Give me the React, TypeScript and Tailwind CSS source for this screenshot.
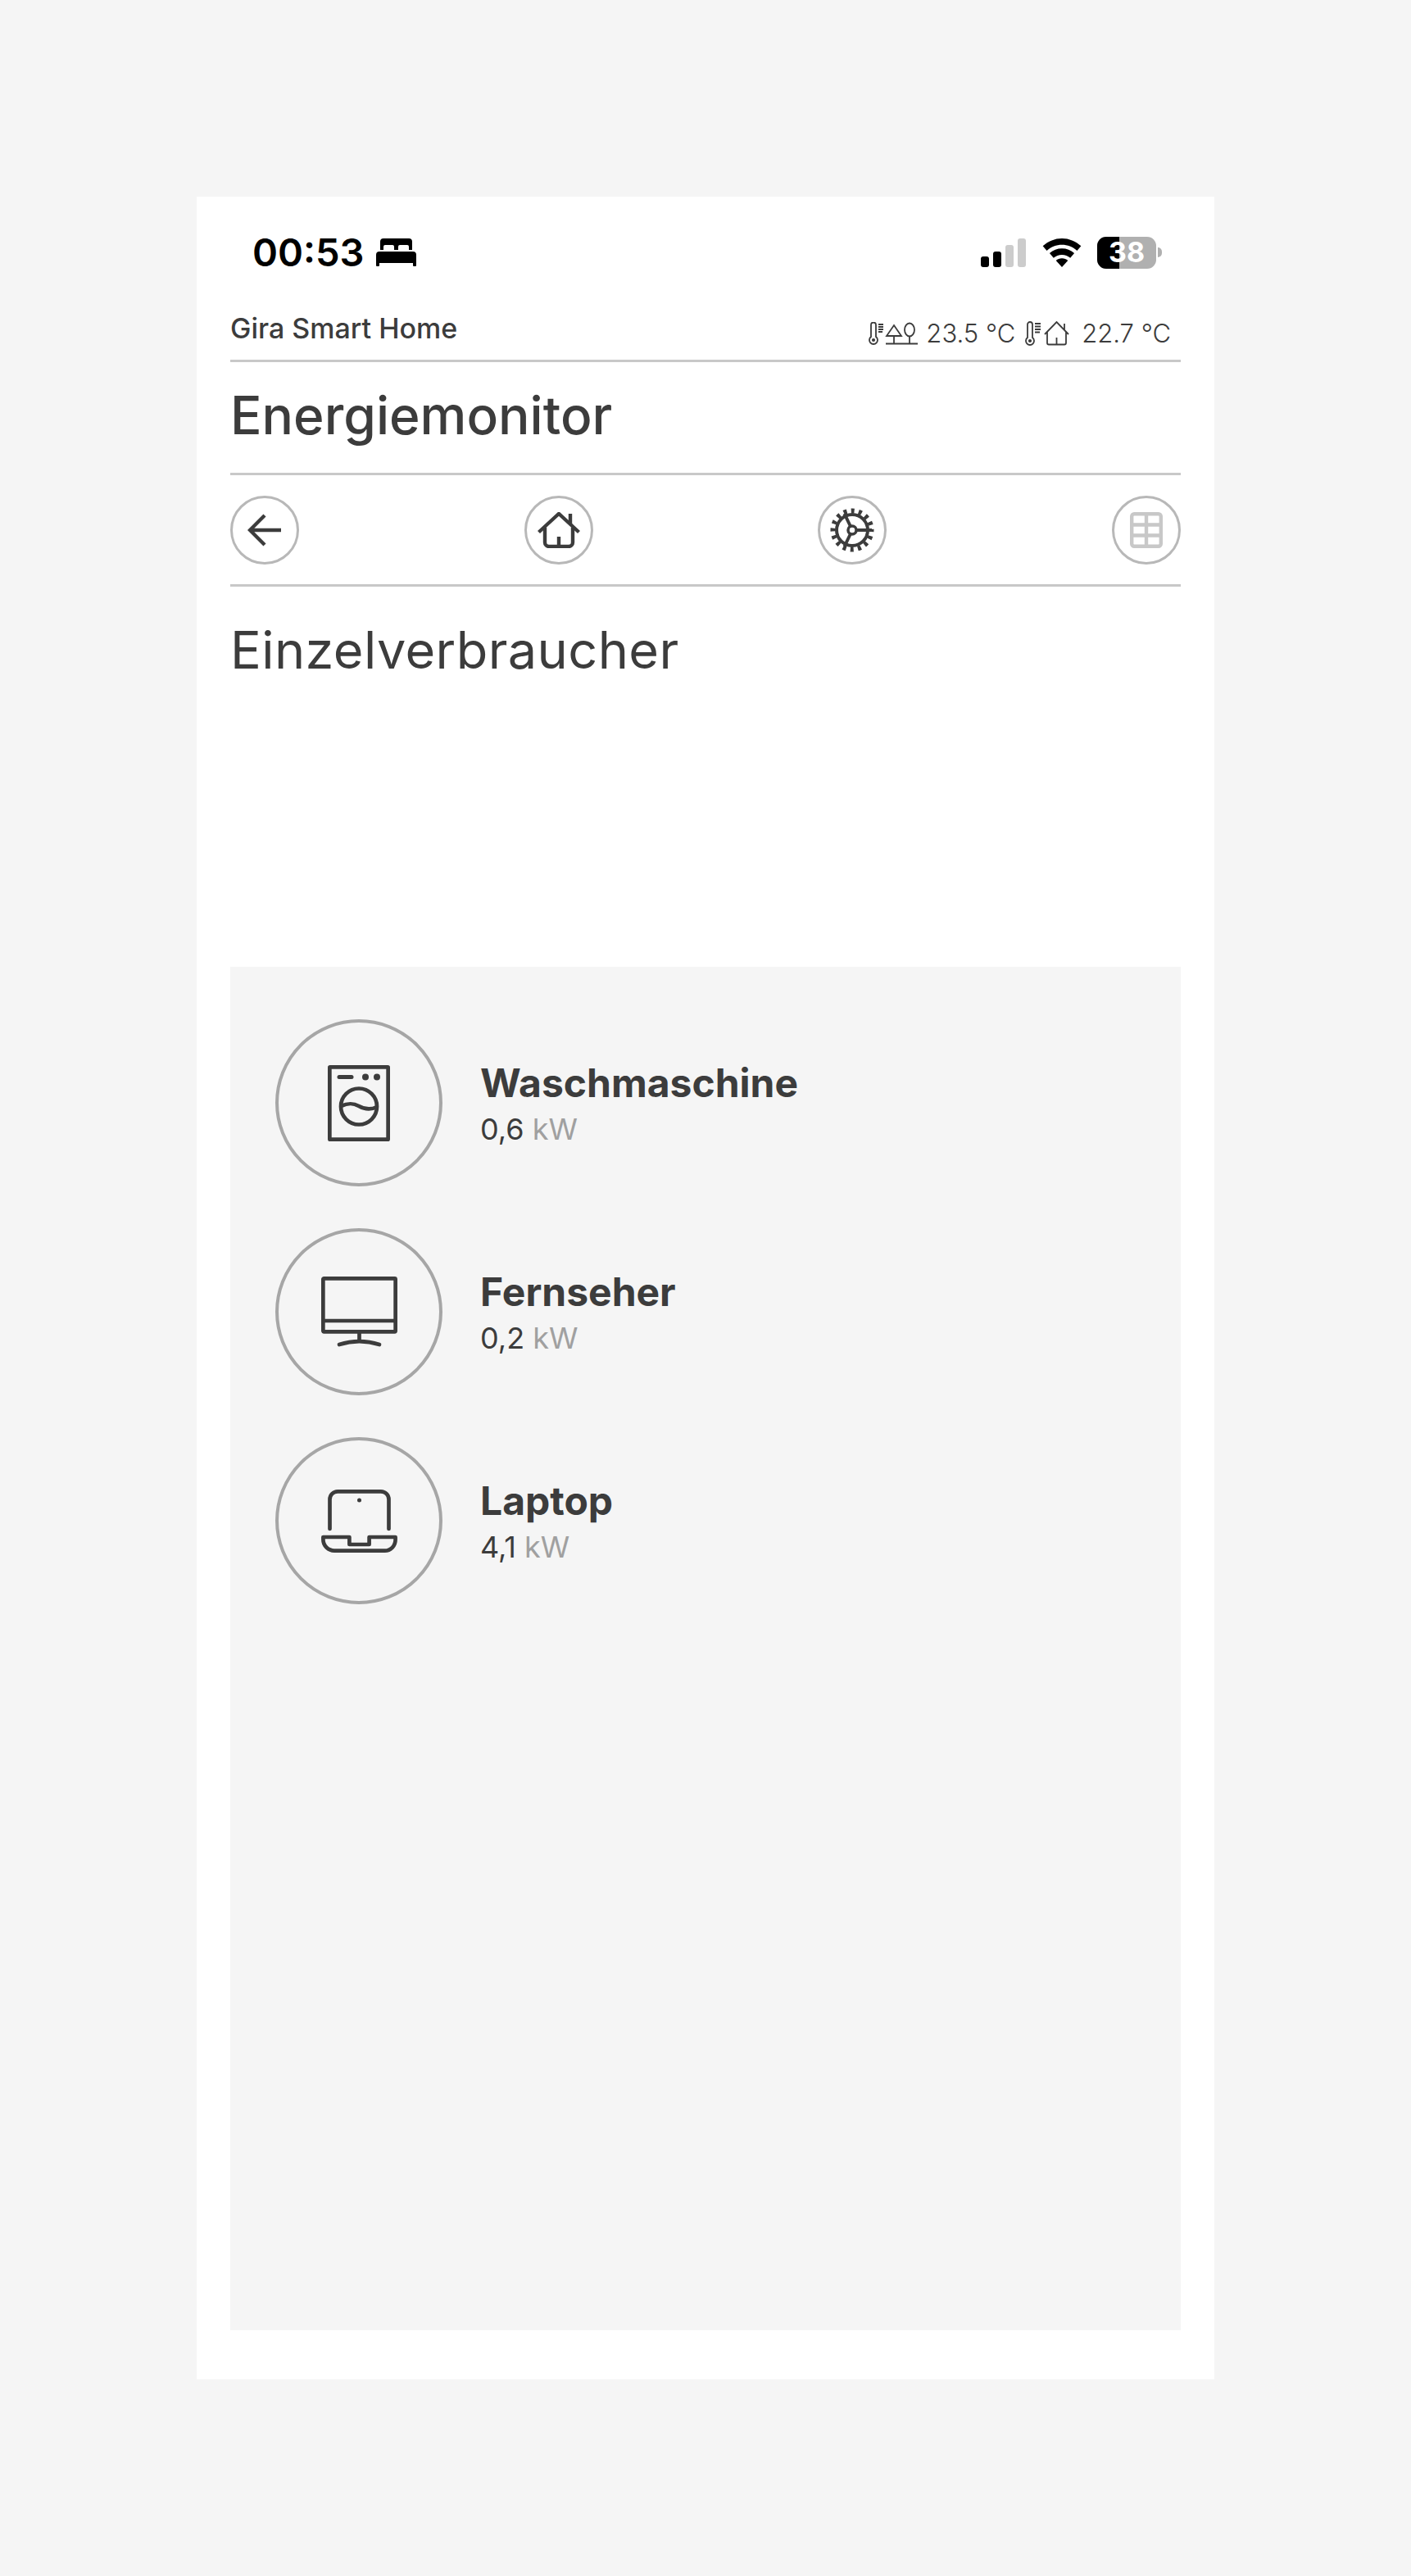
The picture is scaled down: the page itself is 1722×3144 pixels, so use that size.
const font = "font-['Inter','Liberation_Sans',sans-serif]";

function StatusBar() {
  return (
    <div className="flex items-center justify-between h-[40px] pl-[68px] pr-[64px]">
      <div className="flex items-center gap-[15px]">
        <span className="text-[47px] leading-[40px] font-semibold text-black">00:53</span>
        <svg width="49" height="34" viewBox="0 0 49 34" fill="#000">
          <path d="M5 4a4 4 0 0 1 4-4h31a4 4 0 0 1 4 4v10h-4v-4a2 2 0 0 0-2-2h-9a2 2 0 0 0-2 2v4h-5v-4a2 2 0 0 0-2-2h-9a2 2 0 0 0-2 2v4H5z" />
          <path d="M4 16h41a4 4 0 0 1 4 4v13a1 1 0 0 1-1 1h-2a1 1 0 0 1-1-1v-3H4v3a1 1 0 0 1-1 1H1a1 1 0 0 1-1-1V20a4 4 0 0 1 4-4z" />
        </svg>
      </div>
      <div className="flex items-center">
        <svg width="55" height="35" viewBox="0 0 55 35" className="mr-[20px]">
          <rect x="0" y="22" width="10" height="13" rx="3" fill="#000" />
          <rect x="15" y="16" width="10" height="19" rx="3" fill="#000" />
          <rect x="30" y="8" width="10" height="27" rx="3" fill="#ccc" />
          <rect x="45" y="0" width="10" height="35" rx="3" fill="#ccc" />
        </svg>
        <svg width="48" height="35" viewBox="0 0 48 36" className="mr-[19px]" fill="#000">
          <path d="M24 0C15 0 7 3.500 0 9.500l5 6C10.500 10.500 17 8 24 8s13.500 2.500 19 7.500l5-6C41 3.500 33 0 24 0z" />
          <path d="M24 12.500c-6 0-11 2-15.500 6l5 6c3-2.600 6.500-4 10.500-4s7.500 1.400 10.500 4l5-6c-4.500-4-9.500-6-15.500-6z" />
          <path d="M24 25c-3 0-5.300 1-7.500 2.800L24 36l7.500-8.200C29.300 26 27 25 24 25z" />
        </svg>
        <div className="relative w-[72px] h-[39px] rounded-[11px] overflow-hidden flex bg-[#b0b0b0]">
          <div className="w-[27px] bg-black" />
          <span className="absolute inset-0 flex items-center justify-center text-white text-[34px] font-bold leading-none">38</span>
        </div>
        <div className="w-[5px] h-[12px] rounded-r-[5px] bg-[#b0b0b0] ml-[2px]" />
      </div>
    </div>
  );
}

function TempOutIcon() {
  return (
    <svg width="60" height="28" viewBox="0 0 60 28" fill="none" stroke="#3c3c3c" strokeWidth="1.800">
      <path d="M3 18V3.500a3 3 0 0 1 6 0V18a5 5 0 1 1-6 0z" />
      <circle cx="6" cy="22" r="1.200" fill="#3c3c3c" />
      <path d="M12 3h6M12 6h6M12 9h6M12 12h5" />
      <path d="M21 26.500h39M31 17v9.500M50 18v8.500" />
      <path d="M31 4l9 13H22z" />
      <ellipse cx="50" cy="9.500" rx="6" ry="8" />
    </svg>
  );
}

function TempInIcon() {
  return (
    <svg width="56" height="30" viewBox="0 0 56 30" fill="none" stroke="#3c3c3c" strokeWidth="1.800">
      <path d="M3 20V4a3 3 0 0 1 6 0v16a5 5 0 1 1-6 0z" />
      <circle cx="6" cy="24" r="1.200" fill="#3c3c3c" />
      <path d="M12 3h7M12 6.500h7M12 10h7M12 13.500h6" />
      <path d="M24 16L38.500 1 53 16M27 13v13.500a2 2 0 0 0 2 2h19a2 2 0 0 0 2-2V13M38.500 28v-8M48 3v8" />
    </svg>
  );
}

function NavButton({ children }: { children: React.ReactNode }) {
  return (
    <div className="w-[84px] h-[84px] rounded-full border-[3px] border-[#b8b8b8] flex items-center justify-center">
      {children}
    </div>
  );
}

function WasherIcon() {
  return (
    <svg width="76" height="93" viewBox="0 0 76 93" fill="none" stroke="#3c3c3c" strokeWidth="4.700">
      <rect x="2.350" y="2.350" width="71.300" height="88.300" rx="0.500" strokeLinejoin="round" />
      <path d="M14 14.500h15" strokeLinecap="round" strokeWidth="5" />
      <circle cx="46" cy="14.500" r="4" fill="#3c3c3c" stroke="none" />
      <circle cx="60" cy="14.500" r="4" fill="#3c3c3c" stroke="none" />
      <circle cx="38" cy="50.500" r="22" />
      <path d="M16 50c9-4 15-4 22 0s14 5 22 1" />
    </svg>
  );
}

function TvIcon() {
  return (
    <svg width="93" height="86" viewBox="0 0 93 86" fill="none" stroke="#3c3c3c" strokeWidth="4.700">
      <rect x="2.350" y="2.350" width="88.300" height="65" rx="1" />
      <path d="M3 54h87M46.500 68v13" />
      <path d="M22 83c16-5 33-5 49 0" strokeLinecap="round" />
    </svg>
  );
}

function LaptopIcon() {
  return (
    <svg width="93" height="77" viewBox="0 0 93 77" fill="none" stroke="#3c3c3c" strokeWidth="4.700">
      <path d="M10.500 48V12a9.600 9.600 0 0 1 9.600-9.600h52.800a9.600 9.600 0 0 1 9.600 9.600v36" strokeLinecap="round" />
      <circle cx="46.500" cy="13" r="2.500" fill="#3c3c3c" stroke="none" />
      <path d="M2.400 58h32v9h24.200v-9h32v3c0 8-6 13.600-13 13.600H16C9 74.600 2.400 69 2.400 61z" strokeLinejoin="round" />
    </svg>
  );
}

function Consumer({ icon, name, value }: { icon: React.ReactNode; name: string; value: string }) {
  return (
    <div className="flex items-center gap-[46px]">
      <div className="w-[204px] h-[204px] rounded-full border-[4px] border-[#a6a6a6] flex items-center justify-center shrink-0">
        {icon}
      </div>
      <div className="mt-[8px]">
        <div className="text-[48px] leading-[56px] font-bold text-[#3c3c3c]">{name}</div>
        <div className="text-[36px] leading-[56px] text-[#3c3c3c]">
          {value} <span className="text-[#a0a0a0]">kW</span>
        </div>
      </div>
    </div>
  );
}

export default function App() {
  return (
    <div className={`${font} min-h-[3144px] bg-[#f5f5f5] pt-[240px] px-[240px]`}>
      <div className="w-[1242px] h-[2664px] bg-white pt-[48px] pb-[60px] flex flex-col">
        <StatusBar />
        <div className="px-[41px] mt-[42px] flex-1 flex flex-col">
          <div className="h-[72px] pt-[11px] flex items-start justify-between border-b-[3px] border-[#c8c8c8]">
            <span className="text-[34px] leading-[40px] text-[#3c3c3c] font-medium">Gira Smart Home</span>
            <div className="flex items-center pr-[12px] text-[31px] leading-[40px] font-light text-[#3c3c3c] mt-[6px]">
              <TempOutIcon />
              <span className="ml-[10px]">23.5 °C</span>
              <span className="ml-[12px]">
                <TempInIcon />
              </span>
              <span className="ml-[13px]">22.7 °C</span>
            </div>
          </div>
          <div className="h-[138px] pb-[6px] flex items-center border-b-[3px] border-[#c8c8c8]">
            <h1 className="text-[64px] font-medium text-[#3c3c3c] leading-none">Energiemonitor</h1>
          </div>
          <div className="h-[136px] flex items-center justify-between border-b-[3px] border-[#c8c8c8]">
            <NavButton>
              <svg width="42" height="42" viewBox="0 0 42 42" fill="none" stroke="#3c3c3c" strokeWidth="4.400">
                <path d="M41 21H4M21 3L3 21l18 18" />
              </svg>
            </NavButton>
            <NavButton>
              <svg width="52" height="44" viewBox="0 0 52 44" fill="none" stroke="#3c3c3c" strokeWidth="4.400">
                <path d="M1.500 24.500L26 2l24.500 22.500" />
                <path d="M9 19v18a5 5 0 0 0 5 5h24a5 5 0 0 0 5-5V19M26 42V30M40 2v13" />
              </svg>
            </NavButton>
            <NavButton>
              <svg width="56" height="56" viewBox="0 0 56 56" fill="none" stroke="#3c3c3c">
                <circle cx="28" cy="28" r="19" strokeWidth="4" />
                <circle cx="28" cy="28" r="23.500" strokeWidth="6" strokeDasharray="4 5.228" strokeDashoffset="2" />
                <circle cx="28" cy="28" r="5" strokeWidth="3.500" />
                <path d="M18.500 8l7.500 15.500M18.500 48l7.500-15.500M33 28h19" strokeWidth="4" />
              </svg>
            </NavButton>
            <NavButton>
              <svg width="40" height="44" viewBox="0 0 40 44" fill="none" stroke="#c8c8c8" strokeWidth="4.400">
                <rect x="2.200" y="2.200" width="35.600" height="39.600" rx="3" />
                <path d="M2 15.500h36M2 28.500h36M20 2v40" />
              </svg>
            </NavButton>
          </div>
          <h2 className="text-[63px] leading-none text-[#3c3c3c] mt-[46px] tracking-[0.4px]">Einzelverbraucher</h2>
          <div className="mt-[355px] flex-1 bg-[#f5f5f5] pt-[64px] pl-[55px] flex flex-col gap-[51px]">
            <Consumer icon={<WasherIcon />} name="Waschmaschine" value="0,6" />
            <Consumer icon={<TvIcon />} name="Fernseher" value="0,2" />
            <Consumer icon={<LaptopIcon />} name="Laptop" value="4,1" />
          </div>
        </div>
      </div>
    </div>
  );
}
